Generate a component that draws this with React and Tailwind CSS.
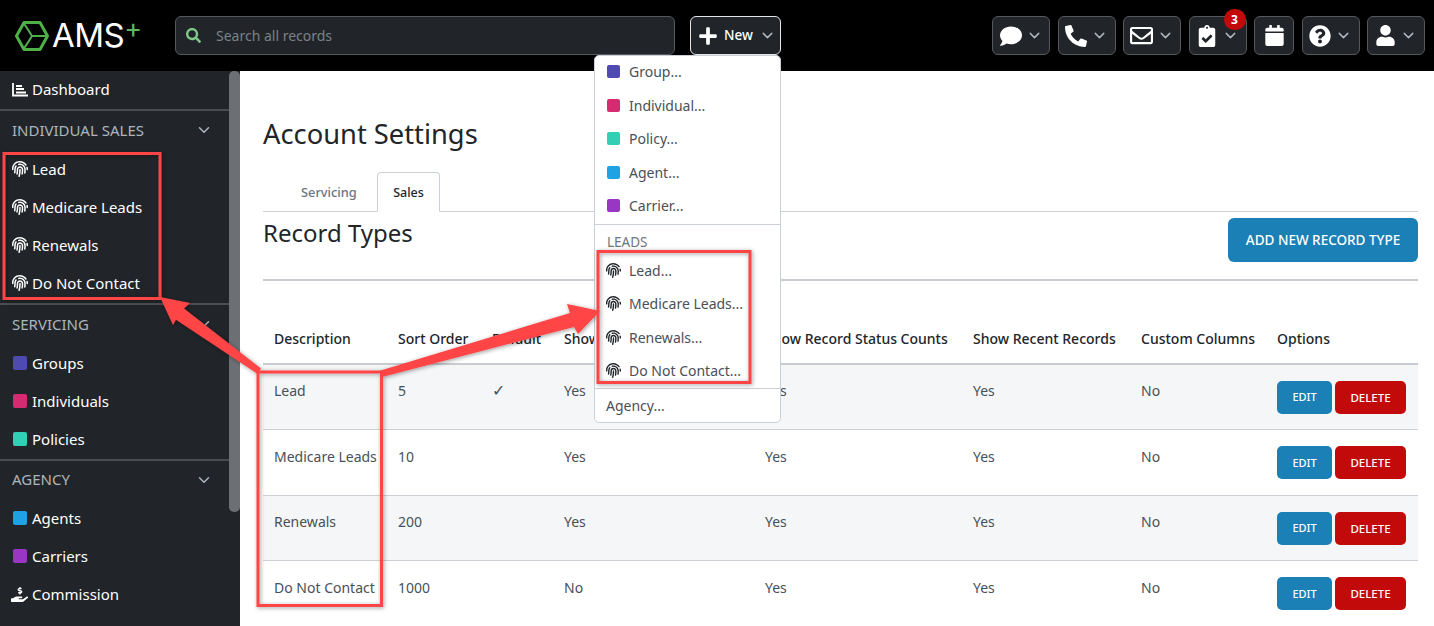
import React from 'react';
import { ChevronDown } from 'lucide-react';
import {
	FaComment, FaPhoneAlt, FaRegEnvelope, FaClipboardCheck, FaCalendar, FaQuestionCircle,
	FaUser, FaSearch, FaPlus, FaFingerprint, FaHandHoldingUsd,
} from 'react-icons/fa';

const FONT = 'font-["Noto_Sans","Open_Sans",sans-serif]';

const rows = [
	{ name: 'Lead', order: '5', def: true, a: 'Yes', b: 'Yes', c: 'Yes' },
	{ name: 'Medicare Leads', order: '10', a: 'Yes', b: 'Yes', c: 'Yes' },
	{ name: 'Renewals', order: '200', a: 'Yes', b: 'Yes', c: 'Yes' },
	{ name: 'Do Not Contact', order: '1000', a: 'No', b: 'Yes', c: 'Yes' },
];

function Swatch({ color }) {
	return <span className={'w-[14px] h-[14px] rounded-[2px] shrink-0 ' + color}></span>;
}

function MenuSwatch({ color }) {
	return <span className={'w-[13px] h-[13px] rounded-[2px] shrink-0 ' + color}></span>;
}

function DashIcon() {
	return (
		<svg width="16" height="15" viewBox="0 0 16 15" fill="none" stroke="white" strokeWidth="1.8">
			<path d="M1 1v12.500h15" />
			<path d="M4 4h6M4 7h8M4 10.500h10" />
		</svg>
	);
}

function SideItem({ icon, label }) {
	return (
		<div className="h-[38px] pb-[2px] flex items-center pl-[11px] gap-[4px] text-white text-[15px]">
			<span className="w-[17px] flex justify-center shrink-0">{icon}</span>
			<span>{label}</span>
		</div>
	);
}

function SideHead({ label, short }) {
	return (
		<div className={'pb-[2px] flex items-center justify-between pl-[12px] pr-[16px] text-[#adb5bd] text-[15px] ' + (short ? 'h-[39px]' : 'h-[40px]')}>
			<span>{label}</span>
			<ChevronDown size={18} className="text-[#adb5bd]" />
		</div>
	);
}

function Divider() {
	return <div className="h-[2px] bg-[#4a4d51]"></div>;
}

function Sidebar() {
	const print = <FaFingerprint size={16} className="text-white" />;
	return (
		<aside className="w-[240px] shrink-0 bg-[#212529] relative overflow-hidden">
			<div className="w-[229px]">
				<SideItem icon={<DashIcon />} label="Dashboard" />
				<Divider />
				<SideHead label="INDIVIDUAL SALES" />
				<SideItem icon={print} label="Lead" />
				<SideItem icon={print} label="Medicare Leads" />
				<SideItem icon={print} label="Renewals" />
				<SideItem icon={print} label="Do Not Contact" />
				<Divider />
				<SideHead label="SERVICING" />
				<SideItem icon={<Swatch color="bg-[#4f4ab0]" />} label="Groups" />
				<SideItem icon={<Swatch color="bg-[#d62b70]" />} label="Individuals" />
				<SideItem icon={<Swatch color="bg-[#31cfb3]" />} label="Policies" />
				<Divider />
				<SideHead label="AGENCY" short />
				<SideItem icon={<Swatch color="bg-[#1fa2e3]" />} label="Agents" />
				<SideItem icon={<Swatch color="bg-[#9a36c4]" />} label="Carriers" />
				<SideItem icon={<FaHandHoldingUsd size={17} className="text-white" />} label="Commission" />
			</div>
			{/* scrollbar thumb */}
			<div className="absolute top-0 right-0 w-[11px] h-[441px] rounded-[5px] bg-[#6c7074]"></div>
		</aside>
	);
}

function IconButton({ icon, chevron = true, badge, width }) {
	return (
		<div className={'relative h-[39px] rounded-[6px] border border-[#55585c] bg-[#212529] flex items-center justify-center gap-[4px] text-white ' + width}>
			{icon}
			{chevron && <ChevronDown size={17} className="text-[#adb5bd]" />}
			{badge && (
				<span className="absolute -top-[8px] right-0 w-[22px] h-[21px] rounded-full bg-[#c20a0a] text-white text-[12px] font-bold flex items-center justify-center">{badge}</span>
			)}
		</div>
	);
}

function Header() {
	return (
		<header className="h-[71px] shrink-0 bg-black flex items-start pt-[16px]">
			<div className="w-[175px] shrink-0 flex items-center pl-[15px] h-[39px]">
				<svg width="34" height="32" viewBox="0 0 34 32" fill="none" className="shrink-0">
					<path d="M9 2.500h16L32.500 16 25 29.500H9L1.500 16z" stroke="#4fb04a" strokeWidth="3" strokeLinejoin="round" />
					<path d="M9 3.500l8 12.500-8 12.500M17 16h15" stroke="#4fb04a" strokeWidth="2" />
				</svg>
				<span className="text-white text-[33px] leading-none font-['Inter',sans-serif] font-normal tracking-[-0.5px] ml-[3px]">AMS</span>
				<span className="text-[#5cb85c] text-[27px] leading-none -mt-[14px] font-['Inter',sans-serif] font-normal">+</span>
			</div>
			<div className="w-[500px] h-[39px] shrink-0 rounded-[6px] border border-[#55585c] bg-[#212529] flex items-center pl-[10px] gap-[15px]">
				<FaSearch size={15} className="text-[#7fc98a]" />
				<span className="text-[#7d8185] text-[14px] -mt-[1px]">Search all records</span>
			</div>
			<div className="ml-[15px] w-[91px] h-[39px] shrink-0 rounded-[6px] border border-[#e4e6e8] bg-[#212529] flex items-center pl-[7px] gap-[6px] text-white">
				<FaPlus size={20} />
				<span className="text-[13.500px] font-medium">New</span>
				<ChevronDown size={17} className="text-[#adb5bd]" />
			</div>
			<div className="ml-auto mr-[9px] flex gap-[7.500px]">
				<IconButton width="w-[58px]" icon={<FaComment size={22} />} />
				<IconButton width="w-[58px]" icon={<FaPhoneAlt size={22} />} />
				<IconButton width="w-[58px]" icon={<FaRegEnvelope size={23} />} />
				<IconButton width="w-[58px]" icon={<FaClipboardCheck size={22} />} badge="3" />
				<IconButton width="w-[40px]" chevron={false} icon={<FaCalendar size={21} />} />
				<IconButton width="w-[58px]" icon={<FaQuestionCircle size={22} />} />
				<IconButton width="w-[58px]" icon={<FaUser size={21} />} />
			</div>
		</header>
	);
}

function MenuItem({ icon, label }) {
	return (
		<div className="h-[33.500px] flex items-center pl-[11px] gap-[8px] text-[#495057] text-[14px] whitespace-nowrap">
			{icon && <span className="w-[15px] flex justify-center shrink-0">{icon}</span>}
			<span>{label}</span>
		</div>
	);
}

function NewMenu() {
	const print = <FaFingerprint size={15} className="text-[#212529] shrink-0" />;
	return (
		<div className="absolute left-[594px] top-[55px] w-[187px] h-[368px] bg-white border border-[#cbd0d6] rounded-[5px] z-10">
			<div className="-mt-[1px]">
				<MenuItem icon={<MenuSwatch color="bg-[#4f4ab0]" />} label="Group..." />
				<MenuItem icon={<MenuSwatch color="bg-[#d62b70]" />} label="Individual..." />
				<MenuItem icon={<MenuSwatch color="bg-[#31cfb3]" />} label="Policy..." />
				<MenuItem icon={<MenuSwatch color="bg-[#1fa2e3]" />} label="Agent..." />
				<MenuItem icon={<MenuSwatch color="bg-[#9a36c4]" />} label="Carrier..." />
				<div className="h-[1px] bg-[#cbd0d6] mt-[1px]"></div>
				<div className="pl-[12px] pt-[7px] h-[29px] text-[13.500px] text-[#6c757d]">LEADS</div>
				<MenuItem icon={print} label="Lead..." />
				<MenuItem icon={print} label="Medicare Leads..." />
				<MenuItem icon={print} label="Renewals..." />
				<MenuItem icon={print} label="Do Not Contact..." />
				<div className="h-[1px] bg-[#cbd0d6]"></div>
				<MenuItem label="Agency..." />
			</div>
		</div>
	);
}

function RecordTable() {
	return (
		<table className="w-full table-fixed border-collapse text-[14px] text-[#495057]">
			<colgroup>
				<col className="w-[124px]" />
				<col className="w-[94px]" />
				<col className="w-[72px]" />
				<col className="w-[201px]" />
				<col className="w-[208px]" />
				<col className="w-[168px]" />
				<col className="w-[136px]" />
				<col />
			</colgroup>
			<thead>
				<tr className="h-[44px] text-left text-[#212529] border-b-2 border-[#c8ccd0]">
					{['Description', 'Sort Order', 'Default', 'Show', 'Show Record Status Counts', 'Show Recent Records', 'Custom Columns', 'Options'].map(h => (
						<th key={h} className="pl-[11px] pb-[6px] font-medium whitespace-nowrap">{h}</th>
					))}
				</tr>
			</thead>
			<tbody>
				{rows.map((r, i) => {
					let cell = 'pl-[11px] align-top ' + (i == 0 ? 'pt-[15px]' : 'pt-[15.500px]');
					return (
						<tr key={r.name} className={'h-[65.500px] border-b border-[#ccd0d4] ' + (i % 2 == 0 ? 'bg-[#f5f6f8]' : 'bg-white')}>
							<td className={cell + ' whitespace-nowrap'}>{r.name}</td>
							<td className={cell}>{r.order}</td>
							<td className={cell + ' text-[16px] leading-[20px]'}>{r.def && '✓'}</td>
							<td className={cell}>{r.a}</td>
							<td className={cell}>{r.b}</td>
							<td className={cell}>{r.c}</td>
							<td className={cell}>No</td>
							<td className="pl-[11px] pt-[1px] align-middle">
								<div className="flex gap-[3px]">
									<button className="w-[55px] h-[33px] rounded-[5px] bg-[#1a80b6] text-white text-[11px] font-medium">EDIT</button>
									<button className="w-[71px] h-[33px] rounded-[5px] bg-[#c20a0a] text-white text-[11.500px] font-medium">DELETE</button>
								</div>
							</td>
						</tr>
					);
				})}
			</tbody>
		</table>
	);
}

function Main() {
	return (
		<main className="flex-1 bg-white overflow-hidden pl-[23px] pr-[16px]">
			<h1 className="text-[27.300px] leading-[34px] text-[#212529] mt-[46px]">Account Settings</h1>
			<div className="mt-[21px] h-[40px] flex items-stretch border-b border-[#cbd0d6] pl-[24px]">
				<div className="w-[90px] pt-[2px] flex items-center text-[12.800px] font-medium text-[#6c757d] pl-[14px]">Servicing</div>
				<div className="w-[63px] h-[40px] pt-[2px] flex items-center justify-center text-[12.500px] font-medium text-[#212529] bg-white border border-[#cbd0d6] border-b-white rounded-t-[4px]">Sales</div>
			</div>
			<div className="flex items-start justify-between pt-[6px] h-[69px] border-b-2 border-[#c8ccd0]">
				<h2 className="text-[24px] leading-[32px] text-[#212529] -mt-[1px]">Record Types</h2>
				<button className="w-[190px] h-[44px] rounded-[6px] bg-[#1a80b6] text-white text-[13.500px] font-medium">ADD NEW RECORD TYPE</button>
			</div>
			<div className="mt-[39px]">
				<RecordTable />
			</div>
		</main>
	);
}

// red callouts drawn on top of the screenshot
function Callouts() {
	return (
		<svg width="1434" height="626" className="absolute left-0 top-0 z-20 pointer-events-none" fill="none">
			<defs>
				<filter id="sh" x="-10%" y="-10%" width="120%" height="120%">
					<feDropShadow dx="1" dy="1" stdDeviation="2" floodColor="#000" floodOpacity="0.4" />
				</filter>
			</defs>
			<g filter="url(#sh)">
				<rect x="4" y="153.500" width="156" height="145" stroke="#ff4444" strokeWidth="3" />
				<rect x="258" y="372" width="123.500" height="233.500" stroke="#ff4444" strokeWidth="3" />
				<rect x="598" y="251.500" width="152" height="131" stroke="#ff4444" strokeWidth="3" />
				<polygon points="160,297 190,303 184,308.500 261,368.500 257,373.500 176,319.700 173,325" fill="#ff4444" />
				<polygon points="600,311 567,304 570,313 379,371 382,377 574,327 578,334" fill="#ff4444" />
			</g>
		</svg>
	);
}

export default function App() {
	return (
		<div className={'relative w-[1434px] h-[626px] overflow-hidden flex flex-col ' + FONT}>
			<Header />
			<div className="flex flex-1 min-h-0">
				<Sidebar />
				<Main />
			</div>
			<NewMenu />
			<Callouts />
		</div>
	);
}
